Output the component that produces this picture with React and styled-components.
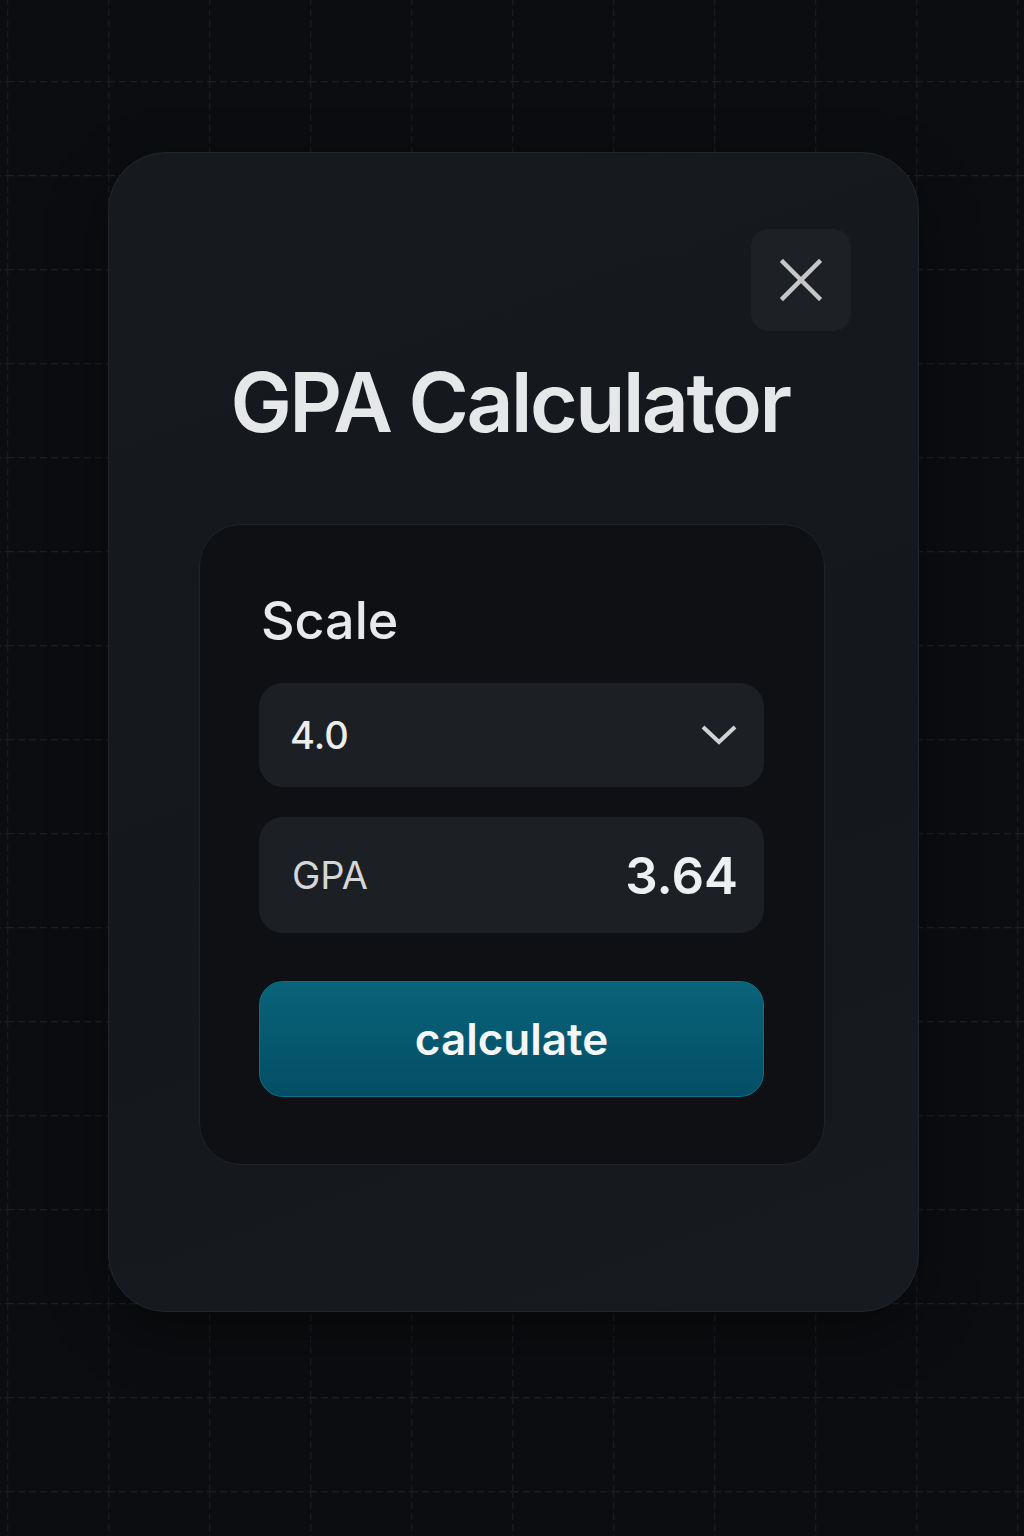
import React from 'react';
import styled, { createGlobalStyle } from 'styled-components';

const gridTile = encodeURIComponent(
  `<svg xmlns="http://www.w3.org/2000/svg" width="101" height="94">` +
    `<path d="M0 0.5H101" stroke="#1d1f23" stroke-width="1.5" stroke-dasharray="7 4"/>` +
    `<path d="M0.5 0V94" stroke="#191b1f" stroke-width="1.5" stroke-dasharray="7 4"/>` +
  `</svg>`
);

const GlobalStyle = createGlobalStyle`
  html, body {
    margin: 0;
    padding: 0;
  }
  body {
    background-color: #0c0d10;
    background-image: url("data:image/svg+xml,${gridTile}");
    background-position: 7px 81px;
    font-family: Inter, 'Noto Sans', 'Liberation Sans', sans-serif;
    color: #e6e7e9;
  }
`;

const Page = styled.div`
  width: 1024px;
  height: 1536px;
  display: flex;
  justify-content: center;
  padding: 152px 0 0 3px;
  box-sizing: border-box;
`;

const Card = styled.div`
  width: 811px;
  height: 1160px;
  box-sizing: border-box;
  border-radius: 58px;
  border: 1.5px solid #22262b;
  background: linear-gradient(160deg, #161a1e 0%, #14171b 60%, #171b1f 100%);
  box-shadow: 0 20px 60px rgba(0, 0, 0, 0.4);
  padding: 76px 67px 0 90px;
  display: flex;
  flex-direction: column;
`;

const TopBar = styled.div`
  display: flex;
  justify-content: flex-end;
`;

const CloseButton = styled.button`
  width: 100px;
  height: 102px;
  border: none;
  border-radius: 18px;
  background: #1d2024;
  display: flex;
  align-items: center;
  justify-content: center;
  padding: 0;
  cursor: pointer;
`;

const Title = styled.h1`
  margin: 22px 0 0 0;
  padding-right: 30px;
  text-align: center;
  font-size: 82px;
  line-height: 100px;
  font-weight: 600;
  letter-spacing: -2.5px;
  color: #e6e7e9;
`;

const Panel = styled.div`
  margin-top: 71px;
  width: 626px;
  height: 641px;
  box-sizing: border-box;
  border-radius: 42px;
  border: 1.5px solid #1f2227;
  background: #0f1014;
  padding: 64px 60px 0 59px;
  display: flex;
  flex-direction: column;
`;

const Label = styled.div`
  font-size: 52px;
  line-height: 64px;
  font-weight: 500;
  color: #e8e9eb;
  margin-left: 2px;
`;

const Field = styled.div`
  height: ${(p) => p.height}px;
  margin-top: ${(p) => p.gap}px;
  border-radius: 24px;
  background: #1c1f23;
  display: flex;
  align-items: center;
  justify-content: space-between;
  padding: 0 26px 0 31px;
`;

const FieldValue = styled.span`
  font-size: 38px;
  font-weight: 500;
  color: #eceded;
`;

const FieldLabel = styled.span`
  font-size: 38px;
  font-weight: 400;
  color: #d4d6d8;
  padding-left: 2px;
`;

const Result = styled.span`
  font-size: 51px;
  font-weight: 600;
  color: #eeeff0;
`;

const CalcButton = styled.button`
  margin-top: 48px;
  height: 116px;
  border-radius: 24px;
  border: 1.5px solid #0c7089;
  background: linear-gradient(180deg, #096379 0%, #034e66 100%);
  color: #f4f6f7;
  font-family: Inter, 'Noto Sans', sans-serif;
  font-size: 44px;
  font-weight: 600;
  cursor: pointer;
`;

const App = () => {
  return (
    <>
      <GlobalStyle />
      <Page>
        <Card>
          <TopBar>
            <CloseButton aria-label="close">
              <svg width="44" height="44" viewBox="0 0 44 44">
                <path d="M4 4L40 40M40 4L4 40" stroke="#c6c6c6" strokeWidth="4.5" strokeLinecap="square" />
              </svg>
            </CloseButton>
          </TopBar>
          <Title>GPA Calculator</Title>
          <Panel>
            <Label>Scale</Label>
            <Field height={104} gap={30}>
              <FieldValue>4.0</FieldValue>
              <svg width="38" height="24" viewBox="0 0 38 24">
                <path d="M3 4L19 19L35 4" fill="none" stroke="#d2d2d2" strokeWidth="4" />
              </svg>
            </Field>
            <Field height={116} gap={30}>
              <FieldLabel>GPA</FieldLabel>
              <Result>3.64</Result>
            </Field>
            <CalcButton>calculate</CalcButton>
          </Panel>
        </Card>
      </Page>
    </>
  );
};

export default App;
